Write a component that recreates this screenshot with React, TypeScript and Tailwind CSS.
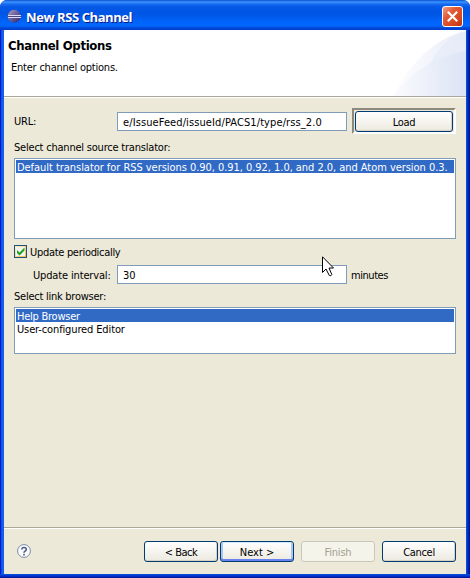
import React from "react";

type ButtonKind = "normal" | "focus" | "disabled";

const buttonStyles: Record<ButtonKind, string> = {
  normal:
    "border-[#003c74] bg-linear-to-b from-white via-[#f5f4ef] to-[#eceadf] shadow-[inset_-1px_-1px_0_#d8d2c6] text-black",
  focus:
    "border-[#003c74] bg-linear-to-b from-white via-[#f5f4ef] to-[#eceadf] shadow-[inset_0_1px_0_#cee7ff,inset_0_-2px_0_#6982ee,inset_2px_0_0_#a9c5f5,inset_-2px_0_0_#a9c5f5] text-black",
  disabled: "border-[#c9c7ba] bg-[#f5f4ea] text-[#a1a192]",
};

function XpButton({ label, kind = "normal", className }: { label: string; kind?: ButtonKind; className: string }) {
  return (
    <button
      className={`flex shrink-0 items-center justify-center rounded-[3px] border pt-[2px] leading-none ${buttonStyles[kind]} ${className}`}
    >
      {label}
    </button>
  );
}

function EclipseIcon() {
  return (
    <svg width="15" height="15" viewBox="0 0 15 15" className="mt-[3px] shrink-0">
      <defs>
        <linearGradient id="sphere" x1="0" y1="0" x2="1" y2="1">
          <stop offset="0" stopColor="#b79fb8" />
          <stop offset="0.45" stopColor="#6d639c" />
          <stop offset="1" stopColor="#2b2470" />
        </linearGradient>
      </defs>
      <circle cx="7.2" cy="7.2" r="6.4" fill="url(#sphere)" />
      <path d="M1 6.5H14M1 8.5H14" stroke="#dcdcf2" strokeWidth="1" />
      <path d="M1 7.5H13.5" stroke="#4b4488" strokeWidth="1" />
    </svg>
  );
}

function TitleBar() {
  return (
    <div className="flex h-[30px] shrink-0 items-center bg-[linear-gradient(#0a50d0_0px,#3c94ff_2px,#1a6cf0_4px,#0458e6_7px,#0055e5_14px,#0064fb_22px,#0066ff_26px,#0048d0_28px,#003dd7_30px)] pl-[7px] pr-[7px]">
      <EclipseIcon />
      <span className="ml-[4px] mt-[4px] flex-1 whitespace-nowrap font-['Open_Sans','Noto_Sans',sans-serif] text-[13px] font-bold leading-none tracking-[-0.42px] text-white [text-shadow:1px_1px_0_#0a1883]">
        New RSS Channel
      </span>
      <button className="mt-[3px] flex h-[21px] w-[21px] items-center justify-center rounded-[3px] border border-white bg-[linear-gradient(135deg,#f0a088_0%,#e25a36_35%,#d8451c_75%,#b83010_100%)]">
        <svg width="13" height="13" viewBox="0 0 13 13">
          <path d="M1.8 1.8L11.2 11.2M11.2 1.8L1.8 11.2" stroke="white" strokeWidth="2.2" />
        </svg>
      </button>
    </div>
  );
}

function Header() {
  return (
    <div className="relative h-[66px] shrink-0 bg-white">
      <svg width="76" height="66" viewBox="0 0 76 66" className="absolute right-0 top-0">
        <defs>
          <linearGradient id="outer" x1="0" x2="1">
            <stop offset="0" stopColor="#ffffff" />
            <stop offset="1" stopColor="#e8ecf8" />
          </linearGradient>
          <linearGradient id="inner" x1="0" x2="1">
            <stop offset="0" stopColor="#fbfcfe" />
            <stop offset="1" stopColor="#dce3f5" />
          </linearGradient>
        </defs>
        <path d="M2 66C20 34 44 8 76 1V66Z" fill="url(#outer)" />
        <path d="M2 66C22 42 46 25 76 21V66Z" fill="url(#inner)" />
        <path d="M39 38C46 20 58 6 76 1V21C62 23 50 29 39 38Z" fill="#e6ebf8" opacity="0.7" />
      </svg>
      <h1 className="pl-[4px] pt-[9px] text-[13px] font-bold leading-[14px] tracking-[-0.34px]">Channel Options</h1>
      <p className="pl-[7px] pt-[8px] leading-[14px] tracking-[-0.22px]">Enter channel options.</p>
    </div>
  );
}

function TextField({ value, className = "" }: { value: string; className?: string }) {
  return (
    <div
      className={`flex h-[19px] w-[230px] shrink-0 items-center border border-[#7f9db9] bg-white pl-[5px] pt-[2px] leading-none ${className}`}
    >
      {value}
    </div>
  );
}

interface ListItem {
  text: string;
  tracking: string;
}

function ListBox({ items, className }: { items: ListItem[]; className: string }) {
  return (
    <ul className={`w-[442px] shrink-0 border border-[#7f9db9] bg-white p-px ${className}`}>
      {items.map(({ text, tracking }, i) => (
        <li
          key={text}
          className={`h-[13px] pl-px leading-[15px] ${tracking} ${i === 0 ? "bg-[#316ac5] text-white" : ""}`}
        >
          {text}
        </li>
      ))}
    </ul>
  );
}

function Pointer() {
  return (
    <svg width="13" height="22" viewBox="0 0 13 22" className="absolute left-[322px] top-[256px]">
      <path d="M0.5 0.8V16.5L4 13L7.3 19.5Q9 20.5 9.8 18.5L7 12H11.5Z" fill="white" stroke="black" />
    </svg>
  );
}

export default function App() {
  return (
    <div className="bg-white">
      <div className="relative flex h-[578px] w-[470px] flex-col overflow-hidden whitespace-nowrap rounded-t-[7px] bg-[linear-gradient(90deg,#0019cf_0px,#0019cf_1px,#0a47e4_1px,#166aee_3px,#0855dd_4px,#0855dd_466px,#0441d8_467px,#0023b8_468px,#00138c_470px)] font-['DejaVu_Sans_Condensed','DejaVu_Sans',sans-serif] text-[11px] text-black">
        <TitleBar />
        <div className="flex min-h-0 flex-1 flex-col px-[4px]">
          <div className="flex min-h-0 flex-1 flex-col bg-[#ece9d8]">
            <Header />
            <div className="h-[2px] shrink-0 border-b border-t border-b-white border-t-[#aca899]" />
            <div className="flex flex-1 flex-col pl-[10px]">
              <div className="mt-[10px] flex h-[26px] items-center">
                <span className="w-[103px] pt-[2px] tracking-[-0.2px]">URL:</span>
                <TextField value="e/IssueFeed/issueId/PACS1/type/rss_2.0" className="tracking-[0.1px]" />
                <div className="ml-[5px] flex h-[26px] w-[104px] border-2 border-b-white border-l-[#8d8a7d] border-r-white border-t-[#8d8a7d] p-px">
                  <XpButton label="Load" className="h-[21px] w-[98px] tracking-[-0.3px]" />
                </div>
              </div>
              <div className="mt-[7px] leading-[14px] tracking-[-0.21px]">Select channel source translator:</div>
              <ListBox
                className="mt-[3px] h-[81px]"
                items={[
                  {
                    text: "Default translator for RSS versions 0.90, 0.91, 0.92, 1.0, and 2.0, and Atom version 0.3.",
                    tracking: "tracking-[-0.045px]",
                  },
                ]}
              />
              <label className="mt-[6px] flex h-[13px] items-center gap-[3px] leading-none">
                <span className="flex h-[13px] w-[13px] items-center justify-center border border-[#1c5180] bg-linear-to-br from-[#fff0cf] to-[#f8b330]">
                  <svg width="9" height="9" viewBox="0 0 9 9" className="bg-[#f3f3ef]">
                    <path d="M1 3V6L3.5 8.5L8.5 3.5V0.5L3.5 5.5Z" fill="#21a121" />
                  </svg>
                </span>
                <span className="pt-[2px] tracking-[-0.3px]">Update periodically</span>
              </label>
              <div className="mt-[7px] flex h-[19px] items-center leading-none">
                <span className="w-[103px] pl-[19px] pt-[2px] tracking-[-0.15px]">Update interval:</span>
                <TextField value="30" />
                <span className="ml-[4px] pt-[2px] tracking-[-0.45px]">minutes</span>
              </div>
              <div className="mt-[6px] leading-[14px] tracking-[-0.25px]">Select link browser:</div>
              <ListBox
                className="mt-[3px] h-[47px]"
                items={[
                  { text: "Help Browser", tracking: "tracking-[-0.25px]" },
                  { text: "User-configured Editor", tracking: "tracking-[-0.13px]" },
                ]}
              />
            </div>
            <div className="h-[2px] shrink-0 border-b border-t border-b-white border-t-[#aca899]" />
            <div className="flex h-[45px] shrink-0 items-center pl-[13px] pr-[10px]">
              <svg width="15" height="15" viewBox="0 0 15 15">
                <circle cx="7" cy="7" r="6.4" fill="#fbfbfa" stroke="#7a8aa8" />
                <path
                  d="M4.8 5.6Q4.8 3.5 7 3.5T9.3 5.5Q9.3 6.5 8 7.2Q7 7.7 7 8.8M7 9.7V11.4"
                  fill="none"
                  stroke="#486090"
                  strokeWidth="1.6"
                />
              </svg>
              <div className="ml-auto flex">
                <XpButton label="< Back" className="h-[21px] w-[74px] tracking-[-0.5px]" />
                <XpButton label="Next >" kind="focus" className="ml-[2px] h-[21px] w-[74px]" />
                <XpButton label="Finish" kind="disabled" className="ml-[7px] h-[21px] w-[74px] tracking-[-0.2px]" />
                <XpButton label="Cancel" className="ml-[7px] h-[21px] w-[74px] tracking-[-0.3px]" />
              </div>
            </div>
          </div>
        </div>
        <div className="h-[4px] shrink-0 bg-[linear-gradient(#0855dd_0px,#0441d8_1px,#0023b8_3px,#00138c_4px)]" />
        <Pointer />
      </div>
    </div>
  );
}
